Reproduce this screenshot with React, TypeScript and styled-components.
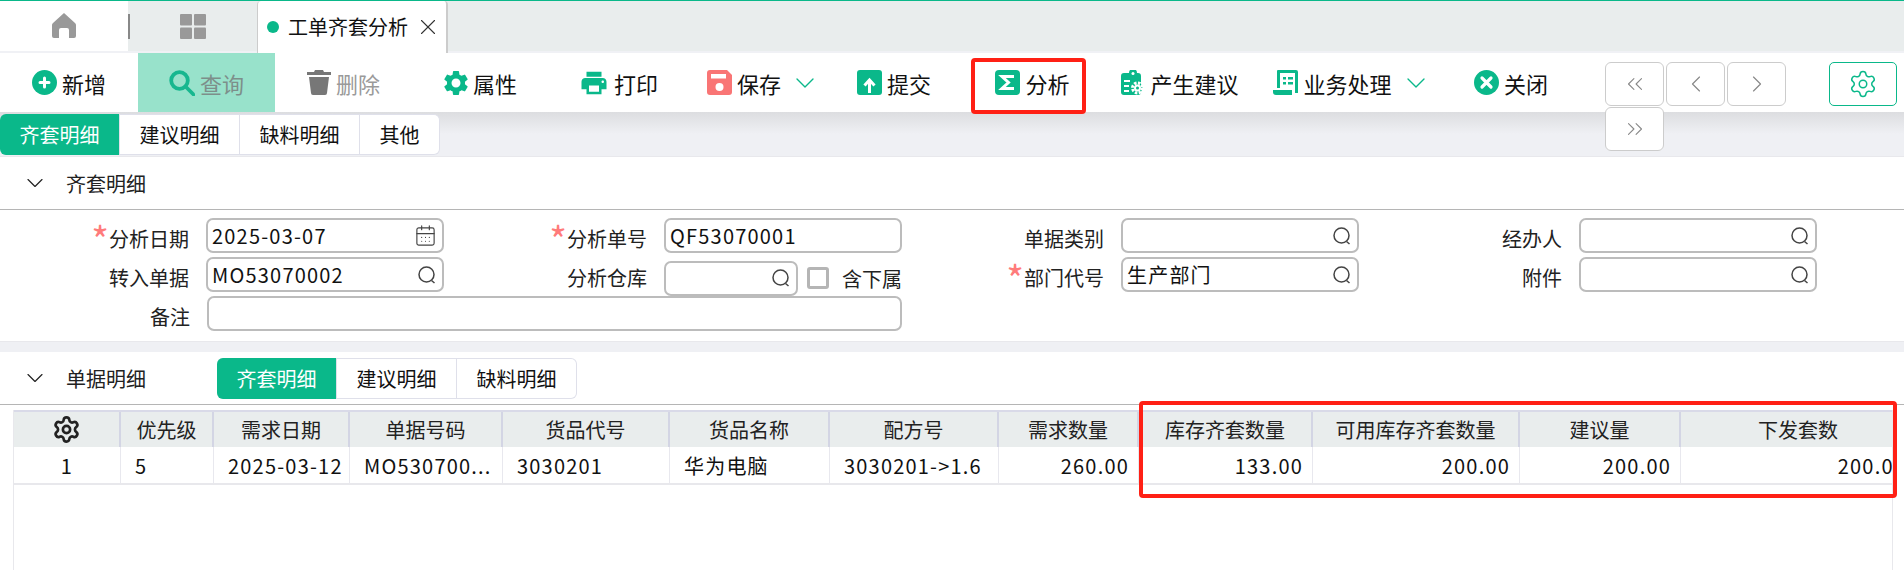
import React from "react";
import styled, { createGlobalStyle } from "styled-components";
import { ChevronDown, ChevronLeft, ChevronRight, ChevronsLeft, ChevronsRight, CalendarDays, Settings, X } from "lucide-react";
import { MdSettings, MdPrint } from "react-icons/md";

const GREEN = "#0ab88a";

const Global = createGlobalStyle`
  html, body { margin: 0; padding: 0; background: #fff; overflow: hidden; }
  body { font-family: "Noto Sans CJK SC", "Liberation Sans", sans-serif; color: #111; }
  * { box-sizing: border-box; }
`;

const Page = styled.div`
  position: relative;
  width: 1904px;
  height: 570px;
  overflow: hidden;
`;

/* top tabs */
const TabBar = styled.div`
  display: flex;
  height: 53px;
  border-top: 1px solid ${GREEN};
  background: linear-gradient(#e9eded 50px, #f0f1f5 50px);
`;
const HomeTab = styled.div`
  width: 128px;
  height: 50px;
  background: #fff;
  display: flex;
  align-items: center;
  justify-content: center;
  padding-bottom: 1px;
`;
const GridTab = styled.div`
  width: 129px;
  height: 50px;
  display: flex;
  align-items: center;
  justify-content: center;
  position: relative;
  &::before {
    content: "";
    position: absolute;
    left: 0;
    top: 13px;
    height: 25px;
    width: 2px;
    background: #888;
  }
`;
const DocTab = styled.div`
  width: 191px;
  height: 52px;
  background: #fff;
  border-left: 1px solid #ccc;
  border-right: 2px solid #ccc;
  border-radius: 4px 4px 0 0;
  display: flex;
  align-items: center;
  padding: 0 0 0 9px;
  font-size: 20px;
  line-height: 50px;
  gap: 9px;
`;
const Dot = styled.span`
  width: 12px;
  height: 12px;
  border-radius: 50%;
  background: ${GREEN};
`;
const CloseBox = styled.span`
  display: flex;
  margin-left: -2px;
  color: #333;
`;

/* toolbar */
const Toolbar = styled.div`
  display: flex;
  height: 59px;
  background: #fff;
  position: relative;
  z-index: 2;
`;
const ToolButton = styled.div<{ $w: number; $active?: boolean; $muted?: boolean }>`
  width: ${(p) => p.$w}px;
  flex: none;
  display: flex;
  align-items: center;
  justify-content: center;
  gap: 5px;
  font-size: 22px;
  background: ${(p) => (p.$active ? "#98e2cb" : "transparent")};
  color: ${(p) => (p.$active ? "#7d8f8a" : p.$muted ? "#9a9a9a" : "#111")};
  svg { flex: none; }
`;
const BleedIcon = styled.span`
  display: flex;
  margin: 0 -3px;
`;
const Caret = styled.span`
  display: flex;
  margin: 0 -8px 0 3px;
  color: ${GREEN};
`;
const Pager = styled.div`
  width: 184px;
  margin-left: 29px;
  margin-top: 9px;
  display: flex;
  flex-wrap: wrap;
  gap: 1px 2px;
  align-content: flex-start;
`;
const PageBtn = styled.div`
  width: 59px;
  height: 44px;
  border: 1px solid #ccc;
  border-radius: 6px;
  background: #fff;
  display: flex;
  align-items: center;
  justify-content: center;
  color: #888;
`;
const GearBtn = styled.div`
  width: 68px;
  height: 44px;
  margin: 9px 0 0 40px;
  border: 1px solid ${GREEN};
  border-radius: 5px;
  display: flex;
  align-items: center;
  justify-content: center;
  color: ${GREEN};
`;

/* band + segmented tabs */
const Band = styled.div`
  height: 45px;
  padding-top: 2px;
  border-bottom: 1px solid #e8e8ec;
  background: linear-gradient(#dcdde0, #eff0f4 50%);
`;
const Segments = styled.div`
  display: inline-flex;
  height: 41px;
  background: #fff;
  border: 1px solid #dfe0ea;
  border-left: 0;
  border-radius: 6px;
`;
const Segment = styled.div<{ $on?: boolean }>`
  padding: 0 19.5px;
  font-size: 20px;
  white-space: nowrap;
  color: ${(p) => (p.$on ? "#fff" : "#111")};
  background: ${(p) => (p.$on ? GREEN : "transparent")};
  border-radius: ${(p) => (p.$on ? "6px 0 0 6px" : "0")};
  margin: ${(p) => (p.$on ? "-1px 0" : "0")};
  line-height: ${(p) => (p.$on ? "41px" : "39px")};
  & + & { border-left: 1px solid #dfe0ea; }
`;

/* section header */
const SectionHead = styled.div<{ $h: number }>`
  height: ${(p) => p.$h}px;
  border-bottom: 1px solid #b5b5b5;
  display: flex;
  align-items: center;
  padding-left: 21px;
  font-size: 20px;
  color: #222;
  position: relative;
`;
const HeadTitle = styled.span`
  margin-left: 17px;
  width: 151px;
`;

/* form */
const FormGrid = styled.div`
  display: grid;
  grid-template-columns: 444px 458px 457px 458px;
  grid-auto-rows: 35px;
  row-gap: 4px;
  padding: 8px 0 10px;
  border-bottom: 1px solid #e8e8ec;
`;
const Group = styled.div<{ $wide?: boolean }>`
  display: grid;
  grid-template-columns: ${(p) => (p.$wide ? "190px 1fr" : "1fr 238px")};
  column-gap: 17px;
  ${(p) => p.$wide && "grid-column: span 2;"}
`;
const Label = styled.label`
  font-size: 20px;
  line-height: 42px;
  text-align: right;
  color: #222;
  white-space: nowrap;
`;
const Star = styled.span`
  color: #ff7b7b;
  font-size: 38px;
  line-height: 0;
  vertical-align: -8px;
`;
const Input = styled.div`
  height: 35px;
  border: 2px solid #bcbcbc;
  border-radius: 7px;
  display: flex;
  align-items: center;
  justify-content: space-between;
  padding: 0 5px 0 4px;
  font-size: 20px;
  letter-spacing: 1.2px;
  color: #111;
  background: #fff;
  white-space: nowrap;
`;
const IconSlot = styled.span`
  margin-left: auto;
  display: flex;
  color: #444;
`;
const SplitField = styled.div`
  display: flex;
  align-items: center;
  ${Input} { width: 134px; flex: none; }
`;
const Check = styled.span`
  width: 22px;
  height: 22px;
  border: 3px solid #b5b5b5;
  border-radius: 3px;
  margin: 0 13px 0 9px;
  flex: none;
`;
const CheckText = styled.span`
  font-size: 20px;
  white-space: nowrap;
  color: #222;
`;
const Gap = styled.div`
  height: 10px;
  background: #eff0f4;
`;

/* table */
const COLS = "107px 93px 136px 153px 167px 160px 169px 140px 174px 207px 161px 234px";
const TableWrap = styled.div`
  margin: 5px 0 0 13px;
  width: 1880px;
  height: 160px;
  overflow: hidden;
  border-left: 1px solid #e8e8ec;
  border-right: 1px solid #e8e8ec;
`;
const TableInner = styled.div`
  width: 1901px;
`;
const HeadRow = styled.div`
  display: grid;
  grid-template-columns: ${COLS};
  height: 37px;
  border-top: 2px solid #d9dae8;
  background: #e9eded;
`;
const HeadCell = styled.div`
  border-right: 2px solid #d3d5e4;
  font-size: 20px;
  line-height: 34px;
  text-align: center;
  color: #222;
  white-space: nowrap;
  display: flex;
  align-items: center;
  justify-content: center;
  &:last-child { border-right: 0; }
`;
const BodyRow = styled.div`
  display: grid;
  grid-template-columns: ${COLS};
  height: 38px;
  border-bottom: 2px solid #e8e8ec;
`;
const Cell = styled.div<{ $align?: "left" | "right" | "center" }>`
  border-right: 1px solid #e8e8ee;
  font-size: 20px;
  line-height: 37px;
  letter-spacing: 1.2px;
  color: #111;
  text-align: ${(p) => p.$align || "left"};
  padding: ${(p) => (p.$align === "right" ? "0 9px 0 0" : p.$align === "center" ? "0" : "0 0 0 14px")};
  white-space: nowrap;
  overflow: hidden;
  &:last-child { border-right: 0; }
`;

/* red annotation boxes over the page */
const Mark = styled.div<{ $x: number; $y: number; $w: number; $h: number }>`
  position: absolute;
  left: ${(p) => p.$x}px;
  top: ${(p) => p.$y}px;
  width: ${(p) => p.$w}px;
  height: ${(p) => p.$h}px;
  border: 4px solid #ff2015;
  border-radius: 4px;
  z-index: 5;
`;

/* drawn icons */
const HomeIcon = () => (
  <svg width="24" height="25" viewBox="0 0 24 25" fill="#999">
    <path d="M12 0 23 10c.7.6 1 1.300 1 2v11a2 2 0 0 1-2 2h-5v-8a2 2 0 0 0-2-2H9a2 2 0 0 0-2 2v8H2a2 2 0 0 1-2-2V12c0-.7.300-1.400 1-2z" />
  </svg>
);
const GridIcon = () => (
  <svg width="26" height="25" viewBox="0 0 26 25" fill="#999">
    <rect width="12" height="11.500" rx="1" />
    <rect x="14" width="12" height="11.500" rx="1" />
    <rect y="13.500" width="12" height="11.500" rx="1" />
    <rect x="14" y="13.500" width="12" height="11.500" rx="1" />
  </svg>
);
const PlusIcon = () => (
  <svg width="25" height="25" viewBox="0 0 25 25">
    <circle cx="12.500" cy="12.500" r="12.500" fill={GREEN} />
    <path d="M12.500 8v9M8 12.500h9" stroke="#fff" strokeWidth="3" strokeLinecap="round" />
  </svg>
);
const QueryIcon = () => (
  <svg width="26" height="26" viewBox="0 0 26 26" fill="none" stroke="#17b78f" strokeWidth="3.800">
    <circle cx="10.500" cy="10.500" r="8.300" />
    <path d="M16.500 16.500l8 8" strokeLinecap="round" />
  </svg>
);
const TrashIcon = () => (
  <svg width="24" height="25" viewBox="0 0 24 25" fill="#777">
    <path d="M8 0h8l1 2h7v3H0V2h7z" />
    <path d="M2 7h20l-2 16a2 2 0 0 1-2 2H6a2 2 0 0 1-2-2z" />
  </svg>
);
const SaveIcon = () => (
  <svg width="25" height="25" viewBox="0 0 25 25">
    <path d="M3 0h17l5 5v17a3 3 0 0 1-3 3H3a3 3 0 0 1-3-3V3a3 3 0 0 1 3-3z" fill="#f97575" />
    <rect x="4" y="4" width="15" height="4.500" fill="#fff" />
    <circle cx="12.500" cy="17" r="4" fill="#fff" />
  </svg>
);
const SubmitIcon = () => (
  <svg width="25" height="25" viewBox="0 0 25 25">
    <rect width="25" height="25" rx="3" fill={GREEN} />
    <path d="M12.500 23V11M7.500 15.500l5-5.500 5 5.500" fill="none" stroke="#fff" strokeWidth="3" />
  </svg>
);
const SigmaIcon = () => (
  <svg width="25" height="25" viewBox="0 0 25 25">
    <rect width="25" height="25" rx="4" fill={GREEN} />
    <path d="M19 6.500H7l6.500 6L7 18.500h12" fill="none" stroke="#fff" strokeWidth="3" />
  </svg>
);
const ClipboardIcon = () => (
  <svg width="24" height="25" viewBox="0 0 24 25">
    <path d="M7 3h1a4 4 0 0 1 8 0h1a3 3 0 0 1 3 3v16a3 3 0 0 1-3 3H3a3 3 0 0 1-3-3V6a3 3 0 0 1 3-3z" fill={GREEN} />
    <circle cx="12" cy="3.500" r="1.500" fill="#fff" />
    <path d="M3 11h6M3 16h5M3 21h5" stroke="#fff" strokeWidth="2" />
    <circle cx="16.500" cy="18" r="5" fill={GREEN} stroke="#fff" strokeWidth="3" strokeDasharray="2.500 1.400" />
    <circle cx="16.500" cy="18" r="3.500" fill="#fff" />
    <circle cx="16.500" cy="18" r="1.500" fill={GREEN} />
  </svg>
);
const LedgerIcon = () => (
  <svg width="25" height="25" viewBox="0 0 25 25" fill={GREEN}>
    <path d="M5 0h18a2 2 0 0 1 2 2v21h-3V3H7v15H4V1a1 1 0 0 1 1-1z" />
    <rect x="10" y="7" width="3" height="2.500" />
    <rect x="15" y="7" width="5" height="2.500" />
    <rect x="10" y="12" width="3" height="2.500" />
    <rect x="15" y="12" width="5" height="2.500" />
    <path d="M0 20h19v5H3a3 3 0 0 1-3-3z" />
  </svg>
);
const CloseIcon = () => (
  <svg width="25" height="25" viewBox="0 0 25 25">
    <circle cx="12.500" cy="12.500" r="12.500" fill={GREEN} />
    <path d="M8 8l9 9M17 8l-9 9" stroke="#fff" strokeWidth="3.200" strokeLinecap="round" />
  </svg>
);
const LensIcon = () => (
  <svg width="20" height="20" viewBox="0 0 20 20" fill="none" stroke="#444" strokeWidth="1.500">
    <circle cx="9.500" cy="9.500" r="7.500" />
    <path d="M14.500 15.500l3 2.500" />
  </svg>
);

type Tool = {
  label: string;
  w: number;
  icon: React.ReactNode;
  active?: boolean;
  muted?: boolean;
  caret?: boolean;
};

const tools: Tool[] = [
  { label: "新增", w: 138, icon: <PlusIcon /> },
  { label: "查询", w: 137, icon: <QueryIcon />, active: true },
  { label: "删除", w: 137, icon: <TrashIcon />, muted: true },
  { label: "属性", w: 137, icon: <BleedIcon><MdSettings size={30} color={GREEN} /></BleedIcon> },
  { label: "打印", w: 139, icon: <MdPrint size={30} color={GREEN} /> },
  { label: "保存", w: 144, icon: <SaveIcon />, caret: true },
  { label: "提交", w: 124, icon: <SubmitIcon /> },
  { label: "分析", w: 153, icon: <SigmaIcon /> },
  { label: "产生建议", w: 142, icon: <ClipboardIcon /> },
  { label: "业务处理", w: 195, icon: <LedgerIcon />, caret: true },
  { label: "关闭", w: 130, icon: <CloseIcon /> },
];

const headers = ["优先级", "需求日期", "单据号码", "货品代号", "货品名称", "配方号", "需求数量", "库存齐套数量", "可用库存齐套数量", "建议量", "下发套数"];

const Required = () => <Star>*</Star>;

export default function App() {
  return (
    <Page>
      <Global />
      <TabBar>
        <HomeTab><HomeIcon /></HomeTab>
        <GridTab><GridIcon /></GridTab>
        <DocTab>
          <Dot />
          工单齐套分析
          <CloseBox><X size={26} strokeWidth={1} /></CloseBox>
        </DocTab>
      </TabBar>

      <Toolbar>
        {tools.map((t) => (
          <ToolButton key={t.label} $w={t.w} $active={t.active} $muted={t.muted}>
            {t.icon}
            {t.label}
            {t.caret && <Caret><ChevronDown size={32} strokeWidth={1} /></Caret>}
          </ToolButton>
        ))}
        <Pager>
          <PageBtn><ChevronsLeft size={26} strokeWidth={1} /></PageBtn>
          <PageBtn><ChevronLeft size={28} strokeWidth={1} /></PageBtn>
          <PageBtn><ChevronRight size={28} strokeWidth={1} /></PageBtn>
          <PageBtn><ChevronsRight size={26} strokeWidth={1} /></PageBtn>
        </Pager>
        <GearBtn><Settings size={30} strokeWidth={1.200} /></GearBtn>
      </Toolbar>

      <Band>
        <Segments>
          <Segment $on>齐套明细</Segment>
          <Segment>建议明细</Segment>
          <Segment>缺料明细</Segment>
          <Segment>其他</Segment>
        </Segments>
      </Band>

      <SectionHead $h={53}>
        <ChevronDown size={28} strokeWidth={1} />
        <HeadTitle>齐套明细</HeadTitle>
      </SectionHead>

      <FormGrid>
        <Group>
          <Label><Required />分析日期</Label>
          <Input>2025-03-07<IconSlot><CalendarDays size={23} strokeWidth={1.200} /></IconSlot></Input>
        </Group>
        <Group>
          <Label><Required />分析单号</Label>
          <Input>QF53070001</Input>
        </Group>
        <Group>
          <Label>单据类别</Label>
          <Input><IconSlot><LensIcon /></IconSlot></Input>
        </Group>
        <Group>
          <Label>经办人</Label>
          <Input><IconSlot><LensIcon /></IconSlot></Input>
        </Group>
        <Group>
          <Label>转入单据</Label>
          <Input>MO53070002<IconSlot><LensIcon /></IconSlot></Input>
        </Group>
        <Group>
          <Label>分析仓库</Label>
          <SplitField>
            <Input><IconSlot><LensIcon /></IconSlot></Input>
            <Check />
            <CheckText>含下属</CheckText>
          </SplitField>
        </Group>
        <Group>
          <Label><Required />部门代号</Label>
          <Input>生产部门<IconSlot><LensIcon /></IconSlot></Input>
        </Group>
        <Group>
          <Label>附件</Label>
          <Input><IconSlot><LensIcon /></IconSlot></Input>
        </Group>
        <Group $wide>
          <Label>备注</Label>
          <Input />
        </Group>
      </FormGrid>
      <Gap />

      <SectionHead $h={53}>
        <ChevronDown size={28} strokeWidth={1} />
        <HeadTitle>单据明细</HeadTitle>
        <Segments>
          <Segment $on>齐套明细</Segment>
          <Segment>建议明细</Segment>
          <Segment>缺料明细</Segment>
        </Segments>
      </SectionHead>

      <TableWrap>
        <TableInner>
          <HeadRow>
            <HeadCell><Settings size={29} strokeWidth={2.200} color="#222" /></HeadCell>
            {headers.map((h) => <HeadCell key={h}>{h}</HeadCell>)}
          </HeadRow>
          <BodyRow>
            <Cell $align="center">1</Cell>
            <Cell>5</Cell>
            <Cell>2025-03-12</Cell>
            <Cell>MO530700...</Cell>
            <Cell>3030201</Cell>
            <Cell>华为电脑</Cell>
            <Cell>3030201-&gt;1.6</Cell>
            <Cell $align="right">260.00</Cell>
            <Cell $align="right">133.00</Cell>
            <Cell $align="right">200.00</Cell>
            <Cell $align="right">200.00</Cell>
            <Cell $align="right">200.00</Cell>
          </BodyRow>
        </TableInner>
      </TableWrap>

      <Mark $x={971} $y={58} $w={115} $h={56} />
      <Mark $x={1139} $y={401} $w={758} $h={97} />
    </Page>
  );
}
